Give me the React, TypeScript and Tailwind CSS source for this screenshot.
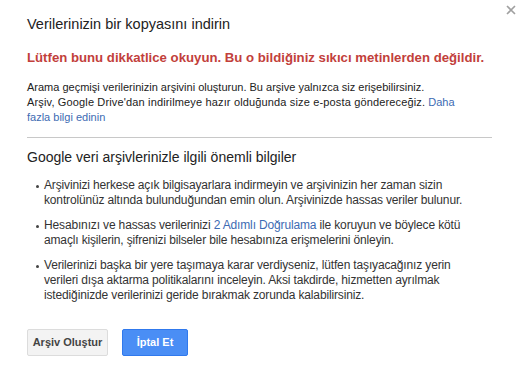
import React from 'react';

const bullets: React.ReactNode[] = [
  'Arşivinizi herkese açık bilgisayarlara indirmeyin ve arşivinizin her zaman sizin kontrolünüz altında bulunduğundan emin olun. Arşivinizde hassas veriler bulunur.',
  <>
    Hesabınızı ve hassas verilerinizi{' '}
    <a className="text-[#3d6bb3]">2 Adımlı Doğrulama</a> ile koruyun ve böylece kötü amaçlı kişilerin, şifrenizi bilseler bile hesabınıza erişmelerini önleyin.
  </>,
  'Verilerinizi başka bir yere taşımaya karar verdiyseniz, lütfen taşıyacağınız yerin verileri dışa aktarma politikalarını inceleyin. Aksi takdirde, hizmetten ayrılmak istediğinizde verilerinizi geride bırakmak zorunda kalabilirsiniz.',
];

export default function App() {
  return (
    <div className="relative w-[524px] h-[366px] bg-white overflow-hidden font-['Liberation_Sans',Arial,sans-serif] text-[#222]">
      {/* close */}
      <button className="absolute top-[5px] right-[8px] text-[#a0a0a0]">
        <svg width="10" height="10" viewBox="0 0 10 10">
          <path d="M1 1L9 9M9 1L1 9" stroke="currentColor" strokeWidth="1.6" />
        </svg>
      </button>

      <div className="pl-[27px] pt-[14px] w-[492px]">
        <h1 className="text-[14.5px] leading-[20px] font-normal">Verilerinizin bir kopyasını indirin</h1>

        <p className="mt-[16px] text-[13.2px] leading-[16px] font-bold text-[#c2403b]">
          Lütfen bunu dikkatlice okuyun. Bu o bildiğiniz sıkıcı metinlerden değildir.
        </p>

        <p className="mt-[14px] max-w-[445px] text-[11px] leading-[15px]">
          Arama geçmişi verilerinizin arşivini oluşturun. Bu arşive yalnızca siz erişebilirsiniz.
          <br />
          <span className="tracking-[0.15px]">Arşiv, Google Drive'dan indirilmeye hazır olduğunda size e-posta göndereceğiz.</span>{' '}
          <a className="text-[#3d6bb3]">Daha fazla bilgi edinin</a>
        </p>

        <div className="mt-[12px] border-t border-[#c8c8c8]" />

        <h2 className="mt-[9px] text-[14px] leading-[20px] font-normal">Google veri arşivlerinizle ilgili önemli bilgiler</h2>

        <ul className="mt-[11px] pr-[6px] flex flex-col gap-[10px] text-[12px] tracking-[-0.15px] leading-[15px] text-[#333]">
          {bullets.map((b, i) => (
            <li key={i} className="flex">
              <span className="shrink-0 w-[3px] h-[3px] rounded-full bg-[#444] ml-[9px] mr-[5px] mt-[7px]" />
              <span>{b}</span>
            </li>
          ))}
        </ul>

        <div className="mt-[26px] flex gap-[14px]">
          <button className="h-[27px] w-[81px] rounded-[2px] border border-[#dcdcdc] bg-[#f3f3f3] text-[11px] font-bold text-[#444]">
            Arşiv Oluştur
          </button>
          <button className="h-[27px] w-[66px] rounded-[2px] border border-[#3079ed] bg-[#4a8ef5] text-[11px] font-bold text-white">
            İptal Et
          </button>
        </div>
      </div>
    </div>
  );
}
